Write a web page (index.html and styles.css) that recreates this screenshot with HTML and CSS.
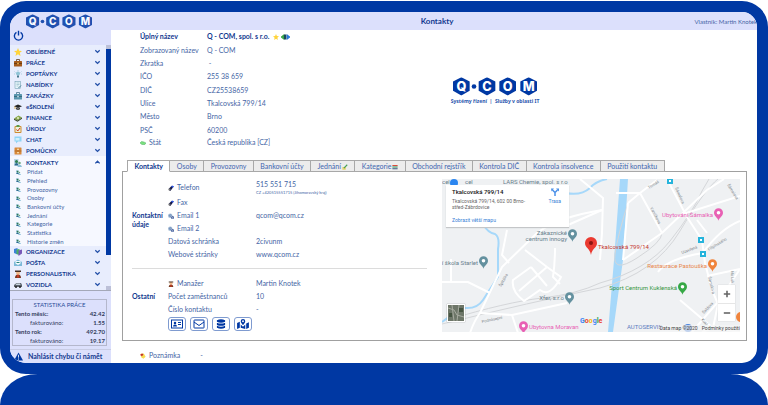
FILE: index.html
```html
<!DOCTYPE html>
<html lang="cs">

	<head>
		<meta charset="UTF-8">
		<title>Kontakty</title>
		<link rel="stylesheet" href="styles.css">
	</head>

	<body>
		<svg class="sprite" aria-hidden="true">
			<symbol id="power" viewBox="0 0 16 16"><path d="M5 3.5a6 6 0 1 0 6 0M8 1v7" fill="none" stroke="#0038a3" stroke-width="2"/></symbol>
			<symbol id="down" viewBox="0 0 8 8"><path d="M1.5 2.5 4 5 6.500 2.500" fill="none" stroke="#2450a8" stroke-width="1.500"/></symbol>
			<symbol id="up" viewBox="0 0 8 8"><path d="M1.500 5 4 2.500 6.500 5" fill="none" stroke="#2450a8" stroke-width="1.500"/></symbol>
			<symbol id="star" viewBox="0 0 16 16"><path d="M8 0l2.300 5.400 5.700.5-4.300 3.800L13 16 8 12.500 3 16l1.300-6.300L0 5.900l5.700-.5z" fill="#ffd43a"/></symbol>
			<symbol id="case" viewBox="0 0 16 16"><path d="M5 4V1h6v3" fill="none" stroke="#5a3310" stroke-width="1.500"/><rect y="4" width="16" height="11" rx="1" fill="#a35a1c"/><path d="M0 9h16" stroke="#5a3310" stroke-width="1.500"/><rect x="6.500" y="7.500" width="3" height="3" fill="#f2c462"/></symbol>
			<symbol id="bulb" viewBox="0 0 16 16"><path d="M8 0v2M1 3l2 2M15 3l-2 2M0 8h2M14 8h2" stroke="#7fb0c4"/><circle cx="8" cy="7" r="4" fill="#8fc4d6"/><rect x="6" y="11" width="4" height="4" fill="#48788c"/></symbol>
			<symbol id="page" viewBox="0 0 16 16"><rect x="2" y="1" width="11" height="14" fill="#e8f6fa" stroke="#5f93a8"/><path d="M5 4h6M5 7h6M5 10h4" stroke="#74a4b6"/><path d="M9 14l5-5" stroke="#4a7f95" stroke-width="2"/></symbol>
			<symbol id="case2" viewBox="0 0 16 16"><path d="M5 4V1h6v3" fill="none" stroke="#3c6f84" stroke-width="1.500"/><rect y="4" width="16" height="11" rx="1" fill="#5895ad"/><path d="M0 9h16" stroke="#2f5f72" stroke-width="1.500"/><rect x="6.500" y="7.500" width="3" height="3" fill="#cfe6ee"/></symbol>
			<symbol id="cap" viewBox="0 0 16 16"><path d="M8 3l8 3.500-8 3.500-8-3.500z" fill="#222"/><path d="M4 9v3.500q4 2.500 8 0V9l-4 2z" fill="#444"/><path d="M2 7v5" stroke="#d89a20" stroke-width="1.500"/></symbol>
			<symbol id="money" viewBox="0 0 16 16"><path d="M0 9l9-6 7 4-9 6z" fill="#8aa84c"/><path d="M0 9l7 4v2.500L0 11.500zM7 13l9-6v2.500l-9 6z" fill="#3d4a2c"/><circle cx="8" cy="8" r="2" fill="#e9efc9"/></symbol>
			<symbol id="task" viewBox="0 0 16 16"><rect x="1" y="2" width="14" height="14" rx="2" fill="#cf8b2e"/><rect x="3" y="4" width="10" height="10" fill="#e9f3da"/><rect x="5" width="6" height="4" fill="#5c9a4a"/><path d="M5 9l2.500 3L12 6" fill="none" stroke="#d2311f" stroke-width="2"/></symbol>
			<symbol id="chat" viewBox="0 0 16 16"><path d="M1 1h14v10H8l-4 4v-4H1z" fill="#8fd4f5"/><path d="M3 4h8v5H3z" fill="#d2effb"/></symbol>
			<symbol id="drawer" viewBox="0 0 16 16"><rect x="1" y="1" width="14" height="14" rx="1" fill="#d8893a"/><path d="M1 8h14" stroke="#8a4c14"/><path d="M6 4.500h4M6 11.500h4" stroke="#fff0c4" stroke-width="2"/></symbol>
			<symbol id="people" viewBox="0 0 16 16"><rect width="9" height="13" fill="#b9d4e6"/><circle cx="5" cy="5" r="3" fill="#2e7d53"/><path d="M1 13q0-5 4-5t4 5z" fill="#2c6b8f"/><circle cx="11" cy="8" r="2.500" fill="#6aa579"/><path d="M7 16q0-5 4-5t5 5z" fill="#8dc0d8"/></symbol>
			<symbol id="shield" viewBox="0 0 16 16"><path d="M0 2l7-2v13L0 10z" fill="#3d80d8"/><path d="M5 3l6-1v12l-6-2z" fill="#4cae62"/><path d="M9 5l7-2v8l-7 5z" fill="#7858b8"/></symbol>
			<symbol id="mail" viewBox="0 0 16 16"><path d="M0 6l8-5 8 5v8H0z" fill="#7db9d8"/><path d="M3 4h10v5l-5 3-5-3z" fill="#f4fbff"/><path d="M5 6h6v2H5z" fill="#27847c"/></symbol>
			<symbol id="person" viewBox="0 0 16 16"><path d="M2 16q0-7 6-7t6 7z" fill="#7a3a22"/><circle cx="8" cy="6" r="4" fill="#efb98a"/><path d="M2 1h12v3H2z" fill="#473024"/><path d="M7 9h2l1 5-2 2-2-2z" fill="#d43b24"/></symbol>
			<symbol id="car" viewBox="0 0 16 16"><path d="M0 8l5-4h9l2 4v4H0z" fill="#59616b"/><path d="M5 5h7l1 3H3z" fill="#c7d3dc"/><circle cx="4" cy="12" r="2" fill="#222"/><circle cx="12" cy="12" r="2" fill="#222"/></symbol>
			<symbol id="phone" viewBox="0 0 16 16"><path d="M2 10L10 2l5 2-8 11q-5 1-5-5z" fill="#171b4a"/><path d="M8 4l4-3 4 3-3 3z" fill="#3158e6"/><circle cx="4" cy="12" r="3" fill="#777"/></symbol>
			<symbol id="at" viewBox="0 0 16 16"><circle cx="6" cy="7" r="6" fill="#a7bdd6"/><circle cx="6" cy="7" r="2.500" fill="none" stroke="#496fa8" stroke-width="1.500"/><path d="M8 8h8v7H8z" fill="#5a72a8"/><path d="M8 8l4 4 4-4" fill="none" stroke="#fff"/></symbol>
			<symbol id="flag" viewBox="0 0 16 16"><path d="M0 8l4-4 6 1 6 3-3 4H5z" fill="#7be07f" stroke="#2c9b42"/></symbol>
			<symbol id="note" viewBox="0 0 16 16"><path d="M2 2l8-1 5 9-6 5-6-4z" fill="#f7dc52"/><path d="M1 3l5-2 3 3-3 4-4-1z" fill="#c5342a"/></symbol>
			<symbol id="net" viewBox="0 0 18 12"><path d="M1 6l4-3v6z" fill="#3aa648" stroke="#3aa648" stroke-width="3"/><rect x="6" y="1" width="5" height="10" fill="#174a5c"/><path d="M17 6l-4-3v6z" fill="#2878d8" stroke="#2878d8" stroke-width="3"/></symbol>
			<symbol id="warn" viewBox="0 0 16 16"><path d="M8 1l8 14H0z" fill="#0038a3"/><path d="M8 5v5M8 11.500v2" stroke="#fff" stroke-width="1.500"/></symbol>
			<symbol id="pin" viewBox="0 0 10 14"><path d="M5 14C4 10 0 9 0 5a5 5 0 0 1 10 0c0 4-4 5-5 9z"/><circle cx="5" cy="5" r="2" fill="#fff"/></symbol>
			<symbol id="hexes" viewBox="0 0 252 56">
				<path d="M25 0 L50 13 V41 L25 55 L0 41 V13Z"/>
				<circle cx="63" cy="28" r="7"/>
				<path d="M102 0 L127 13 V41 L102 55 L77 41 V13Z"/>
				<path d="M164 0 L189 13 V41 L164 55 L139 41 V13Z"/>
				<path d="M227 0 L252 13 V41 L227 55 L202 41 V13Z"/>
			</symbol>
		</svg>

		<div class="frame">
			<header class="top">
				<a class="brand" href="#" aria-label="Q-COM">
					<svg viewBox="0 0 252 56">
						<use href="#hexes"/>
						<g class="logo-text"><text x="25" y="41">Q</text><text x="102" y="41">C</text><text x="164" y="41">O</text><text x="227" y="41">M</text></g>
						<circle cx="164" cy="28" r="5"/>
					</svg>
				</a>
				<h1>Kontakty</h1>
				<span class="owner">Vlastník: Martin Knotek</span>
			</header>

			<aside class="side">
				<div class="side-head">
					<button class="power" aria-label="Odhlásit"><svg><use href="#power"/></svg></button>
				</div>
				<div class="menu-wrap">
					<nav class="menu">
						<div class="group group-top">
							<a href="#"><svg><use href="#star"/></svg>OBLÍBENÉ<svg class="arr"><use href="#down"/></svg></a>
							<a href="#"><svg><use href="#case"/></svg>PRÁCE<svg class="arr"><use href="#down"/></svg></a>
							<a href="#"><svg><use href="#bulb"/></svg>POPTÁVKY<svg class="arr"><use href="#down"/></svg></a>
							<a href="#"><svg><use href="#page"/></svg>NABÍDKY<svg class="arr"><use href="#down"/></svg></a>
							<a href="#"><svg><use href="#case2"/></svg>ZAKÁZKY<svg class="arr"><use href="#down"/></svg></a>
							<a href="#"><svg><use href="#cap"/></svg>eŠKOLENÍ<svg class="arr"><use href="#down"/></svg></a>
							<a href="#"><svg><use href="#money"/></svg>FINANCE<svg class="arr"><use href="#down"/></svg></a>
							<a href="#"><svg><use href="#task"/></svg>ÚKOLY<svg class="arr"><use href="#down"/></svg></a>
							<a href="#"><svg><use href="#chat"/></svg>CHAT<svg class="arr"><use href="#down"/></svg></a>
							<a href="#"><svg><use href="#drawer"/></svg>POMŮCKY<svg class="arr"><use href="#down"/></svg></a>
						</div>
						<div class="group open">
							<a href="#"><svg><use href="#people"/></svg>KONTAKTY<svg class="arr"><use href="#up"/></svg></a>
						</div>
						<div class="sub">
							<a href="#"><svg><use href="#people"/></svg>Přidat</a>
							<a href="#"><svg><use href="#people"/></svg>Přehled</a>
							<a href="#"><svg><use href="#people"/></svg>Provozovny</a>
							<a href="#"><svg><use href="#people"/></svg>Osoby</a>
							<a href="#"><svg><use href="#people"/></svg>Bankovní účty</a>
							<a href="#"><svg><use href="#people"/></svg>Jednání</a>
							<a href="#"><svg><use href="#people"/></svg>Kategorie</a>
							<a href="#"><svg><use href="#people"/></svg>Statistika</a>
							<a href="#"><svg><use href="#people"/></svg>Historie změn</a>
						</div>
						<div class="group">
							<a href="#"><svg><use href="#shield"/></svg>ORGANIZACE<svg class="arr"><use href="#down"/></svg></a>
							<a href="#"><svg><use href="#mail"/></svg>POŠTA<svg class="arr"><use href="#down"/></svg></a>
							<a href="#"><svg><use href="#person"/></svg>PERSONALISTIKA<svg class="arr"><use href="#down"/></svg></a>
							<a href="#"><svg><use href="#car"/></svg>VOZIDLA<svg class="arr"><use href="#down"/></svg></a>
						</div>
					</nav>
					<div class="scroll"><div class="thumb"></div></div>
				</div>
				<table class="stats">
					<caption>STATISTIKA PRÁCE</caption>
					<tr><th>Tento měsíc:</th><td>42.42</td></tr>
					<tr><th class="in">fakturováno:</th><td>1.55</td></tr>
					<tr><th>Tento rok:</th><td>492.70</td></tr>
					<tr><th class="in">fakturováno:</th><td>19.17</td></tr>
				</table>
				<a class="report" href="#"><svg><use href="#warn"/></svg>Nahlásit chybu či námět</a>
			</aside>

			<main>
				<section class="info">
					<dl>
						<dt class="b">Úplný název</dt><dd class="b">Q - COM, spol. s r.o. <svg><use href="#star"/></svg><svg class="net"><use href="#net"/></svg></dd>
						<dt>Zobrazovaný název</dt><dd>Q - COM</dd>
						<dt>Zkratka</dt><dd>&nbsp;-</dd>
						<dt>IČO</dt><dd>255 38 659</dd>
						<dt>DIČ</dt><dd>CZ25538659</dd>
						<dt>Ulice</dt><dd>Tkalcovská 799/14</dd>
						<dt>Město</dt><dd>Brno</dd>
						<dt>PSČ</dt><dd>60200</dd>
						<dt><svg><use href="#flag"/></svg>Stát</dt><dd>Česká republika [CZ]</dd>
					</dl>
					<div class="company">
						<svg viewBox="0 0 252 56">
							<use href="#hexes"/>
							<g class="logo-text"><text x="25" y="41">Q</text><text x="102" y="41">C</text><text x="164" y="41">O</text><text x="227" y="41">M</text></g>
							<circle cx="164" cy="28" r="5"/>
						</svg>
						<p>Systémy řízení &nbsp;|&nbsp; Služby v oblasti IT</p>
					</div>
				</section>

				<div class="tabs" role="tablist">
					<button role="tab" class="active" aria-selected="true">Kontakty</button>
					<button role="tab">Osoby</button>
					<button role="tab">Provozovny</button>
					<button role="tab">Bankovní účty</button>
					<button role="tab">Jednání<svg viewBox="0 0 16 16"><path d="M1 8h9v7H1z" fill="#e5d36a"/><path d="M5 11l9-9" stroke="#46a05a" stroke-width="3"/></svg></button>
					<button role="tab">Kategorie<svg viewBox="0 0 16 16"><path d="M1 4h14" stroke="#d84a3a" stroke-width="3"/><path d="M1 8h14" stroke="#2f8a58" stroke-width="3"/><path d="M1 12.500h14" stroke="#3a5580" stroke-width="3"/></svg></button>
					<button role="tab">Obchodní rejstřík</button>
					<button role="tab">Kontrola DIČ</button>
					<button role="tab">Kontrola insolvence</button>
					<button role="tab">Použití kontaktu</button>
				</div>

				<section class="panel">
					<div class="details">
						<div class="block">
							<h2>Kontaktní údaje</h2>
							<dl>
								<dt><svg><use href="#phone"/></svg>Telefon</dt><dd>515 551 715<small>CZ +420515551715 (Jihomoravský kraj)</small></dd>
								<dt><svg><use href="#phone"/></svg>Fax</dt><dd></dd>
								<dt><svg><use href="#at"/></svg>Email 1</dt><dd>qcom@qcom.cz</dd>
								<dt><svg><use href="#at"/></svg>Email 2</dt><dd></dd>
								<dt>Datová schránka</dt><dd>2civunm</dd>
								<dt>Webové stránky</dt><dd>www.qcom.cz</dd>
							</dl>
						</div>
						<div class="block other">
							<h2>Ostatní</h2>
							<dl>
								<dt><svg><use href="#person"/></svg>Manažer</dt><dd>Martin Knotek</dd>
								<dt>Počet zaměstnanců</dt><dd>10</dd>
								<dt>Číslo kontaktu</dt><dd>-</dd>
							</dl>
						</div>
						<div class="actions">
							<button aria-label="Vizitka"><svg viewBox="0 0 24 18"><rect x="1" y="1" width="22" height="16" fill="none" stroke="#0038a3" stroke-width="2"/><circle cx="8" cy="7" r="2.500"/><path d="M4 14q0-4 4-4t4 4zM14 5h6v2h-6zM14 9h6v2h-6z"/></svg></button>
							<button aria-label="Napsat e-mail"><svg viewBox="0 0 24 18"><rect x="2" y="1" width="20" height="16" rx="1" fill="none" stroke="#0038a3" stroke-width="2"/><path d="M2 5l10 7 10-7" fill="none" stroke="#0038a3" stroke-width="2"/></svg></button>
							<button aria-label="Databáze"><svg viewBox="0 0 24 22"><path d="M3 3q9-5 18 0v3q-9 4-18 0zM3 8q9 4 18 0v5q-9 4-18 0zM3 15q9 4 18 0v4q-9 5-18 0z"/></svg></button>
							<button aria-label="Mapa"><svg viewBox="0 0 26 22"><path d="M0 9l6-3v13l-6 3zM8 12l5 5 5-5v10l-10-3zM20 10l6-3v12l-6 3z"/><path d="M13 14C12 11 8 9 8 5a5 5 0 0 1 10 0c0 4-4 6-5 9z"/><circle cx="13" cy="5" r="2" fill="#fff"/></svg></button>
						</div>
					</div>

					<div class="map">
						<svg class="canvas" viewBox="0 0 298 153" preserveAspectRatio="xMidYMid slice">
							<rect width="298" height="153" fill="#eff1f3"/>
							<g fill="none" stroke="#a6d8fa" stroke-width="2">
								<path d="M40 44Q46 54 53 55Q58 58 56 70V98Q48 110 41 121Q35 130 23 129Q12 134 0 143"/>
								<path d="M124 14Q139 17 148 9Q154 2 165 0"/>
							</g>
							<path d="M178 0h8L181 81 171 153h-5L172 81z" fill="#a6d8fa"/>
							<g fill="none" stroke="#d4d6d9">
								<path d="M5 141Q65 123 100 119T158 104Q205 91 228 62T260 12L267 0M0 145Q90 123 158 109Q213 94 238 52T276 0"/>
								<path d="M186 24Q176 55 173 75T195 79T220 54"/>
							</g>
							<g fill="none" stroke="#fff" stroke-width="2">
								<path d="M28 154Q32 142 38 134L60 88 95 54Q116 38 160 31M65 51L60 76 67 84M83 71L105 88 119 98Q108 119 98 111L82 122Q69 112 71 101L89 88M77 112L105 88M89 88L105 107M113 69Q113 84 111 98L118 105"/>
								<path d="M0 103H26L48 114M9 80V103M38 134L70 136 125 124M70 136L76 154"/>
								<path d="M138 0L161 19 160 54 158 81M126 46L160 31M174 14H188L198 14 215 1M198 14L220 54 265 11 282 0M186 24L198 14M181 81L220 54M186 24L181 81"/>
								<path d="M225 0L245 38 260 61 263 84 270 111 276 125 271 149M241 35L298 17M255 41L265 54M216 93Q225 80 261 74Q278 50 298 42M265 97L298 90M238 121L271 149M250 153L276 123 298 90M260 153L271 149 298 153"/>
							</g>
							<g fill="#26b4dc">
								<rect x="225" y="0" width="6" height="5"/><rect x="256" y="58" width="6" height="6"/><rect x="258" y="72" width="6" height="6"/>
							</g>
							<g fill="#fff"><rect x="227" y="1" width="2" height="2"/><rect x="258" y="60" width="2" height="2"/><rect x="260" y="74" width="2" height="2"/></g>
							<g class="road">
								<text transform="translate(59 108) rotate(-60)">Špitálka</text>
								<text transform="translate(40 144) rotate(-12)">Podnásepní</text>
								<text transform="translate(207 10) rotate(-32)">Tomáš</text>
								<text transform="translate(208 29) rotate(62)">Vaníčkova</text>
								<text transform="translate(233 9) rotate(66)">Šámalova</text>
								<text transform="translate(285 6) rotate(58)">Šámalova</text>
								<text transform="translate(240 75) rotate(-20)">Uzavřená</text>
								<text transform="translate(267 72) rotate(-32)">Filipínského</text>
								<text transform="translate(266 98) rotate(76)">Šámalova</text>
								<text transform="translate(262 135) rotate(-48)">Šaldova</text>
								<text transform="translate(289 92) rotate(88)">Na Luk</text>
								<text transform="translate(259 141) rotate(48)">Kukl</text>
							</g>
							<g class="place">
								<text x="61" y="5">LARS Chemie, spol. s r.o</text>
								<text x="23" y="5">cel</text>
								<text x="0" y="5">cel</text>
								<text x="125" y="56" text-anchor="end">Zákaznické</text>
								<text x="125" y="62" text-anchor="end">centrum innogy</text>
								<text x="36" y="86" text-anchor="end">í škola Starlet</text>
								<text x="122" y="121" text-anchor="end">Xfer, s.r.o</text>
								<text x="185" y="150" fill="#5b7dc0">AUTOSERVIS</text>
								<text x="87" y="150" fill="#e860b4">Ubytovna Moravan</text>
								<text x="271" y="38" text-anchor="end" fill="#e860b4">Ubytování Šámalka</text>
								<text x="265" y="89" text-anchor="end" fill="#e8854a">Restaurace Pastouška</text>
								<text x="235" y="111" text-anchor="end" fill="#36963f">Sport Centrum Kuklenská</text>
								<text class="target" x="156" y="70">Tkalcovská 799/14</text>
							</g>
							<circle cx="12" cy="4" r="4" fill="#2b86f0"/>
							<circle cx="246" cy="149" r="4" fill="#4a82dc"/>
							<circle cx="299" cy="138" r="5" fill="#f0843c"/>
							<g fill="#64919f">
								<use href="#pin" x="126" y="50" width="9" height="13"/>
								<use href="#pin" x="37" y="77" width="9" height="13"/>
								<use href="#pin" x="123" y="113" width="9" height="13"/>
							</g>
							<use href="#pin" x="77" y="142" width="9" height="13" fill="#e860b4"/>
							<use href="#pin" x="272" y="29" width="9" height="13" fill="#e860b4"/>
							<use href="#pin" x="266" y="80" width="9" height="13" fill="#f0843c"/>
							<use href="#pin" x="236" y="103" width="9" height="13" fill="#36a845"/>
							<path d="M149 76C148 69 143 69 143 64a6 6 0 0 1 12 0c0 5-5 5-6 12z" fill="#ea3a30"/>
							<circle cx="149" cy="64" r="2" fill="#8c1410"/>
							<g class="google"><text x="138" y="144"><tspan fill="#4285f4">G</tspan><tspan fill="#ea4335">o</tspan><tspan fill="#fbbc05">o</tspan><tspan fill="#4285f4">g</tspan><tspan fill="#34a853">l</tspan><tspan fill="#ea4335">e</tspan></text></g>
						</svg>
						<div class="card">
							<div>
								<h3>Tkalcovská 799/14</h3>
								<p>Tkalcovská 799/14, 602 00 Brno-střed-Zábrdovice</p>
								<a href="#">Zobrazit větší mapu</a>
							</div>
							<a class="route" href="#"><svg viewBox="0 0 16 16"><path d="M8 16V9L3 4M8 9l5-5" fill="none" stroke="#4a90e8" stroke-width="3"/><path d="M0 1h6L1 7zM10 1h6v6z" fill="#4a90e8"/></svg>Trasa</a>
						</div>
						<button class="sat" aria-label="Satelitní mapa"><svg viewBox="0 0 16 16"><rect width="16" height="16" fill="#6d7668"/><path d="M0 3l6 2 3 5 7 2M4 0l2 16M11 0l-2 16" stroke="#a7aba0" fill="none"/><path d="M1 8h3v4H1zM11 3h4v4h-4z" fill="#465542"/></svg></button>
						<div class="zoom">
							<button aria-label="Přiblížit"><svg viewBox="0 0 10 10"><path d="M5 1v8M1 5h8" stroke="#666" stroke-width="2"/></svg></button>
							<button aria-label="Oddálit"><svg viewBox="0 0 10 10"><path d="M1 5h8" stroke="#666" stroke-width="2"/></svg></button>
						</div>
						<div class="terms"><span>Data map ©2020</span><a href="#">Podmínky použití</a></div>
					</div>
				</section>

				<div class="remark"><span><svg><use href="#note"/></svg>Poznámka</span><span>-</span></div>
			</main>
		</div>
		<div class="base"></div>
	</body>

</html>
```
FILE: styles.css
```css
* {
	box-sizing: border-box;
	margin: 0;
	padding: 0;
}

body {
	display: flex;
	flex-direction: column;
	min-height: 100vh;
	padding-top: 1px;
	background: #fff;
	font: 7px/9px "Century Gothic", Lato, sans-serif;
	color: #4565a5;
}

a {
	color: inherit;
	text-decoration: none;
}

button {
	font: inherit;
	color: inherit;
	border: 0;
	background: none;
	cursor: pointer;
}

svg {
	flex: none;
	width: 8px;
	height: 8px;
	fill: #0038a3;
}

.sprite {
	position: absolute;
	width: 0;
	height: 0;
}

.logo-text {
	fill: #fff;
	font: 800 38px Inter, sans-serif;
	text-anchor: middle;
}

.frame {
	display: grid;
	grid-template-columns: 101px 1fr;
	grid-template-rows: 18px 1fr;
	border: 11px solid #0038a3;
	border-left-width: 10px;
	border-radius: 26px;
	background: #fff;
	overflow: hidden;
}

.base {
	flex: 1;
	min-height: 30px;
	background: #0038a3;
	border-radius: 44px 44px 0 0 / 36px 36px 0 0;
}

/* header */
.top {
	grid-column: 1 / 3;
	display: grid;
	grid-template-columns: 107px 1fr auto 1fr;
	align-items: center;
	background: #dce0fc;
}

.brand {
	padding-left: 16px;
}

.brand svg {
	display: block;
	width: 66px;
	height: 15px;
	opacity: 0.85;
}

h1 {
	grid-column: 3;
	font-size: 8px;
	color: #12398f;
}

.owner {
	font-size: 6px;
	text-align: right;
	white-space: nowrap;
}

/* sidebar */
.side {
	align-self: start;
	background: #dce0fc;
}

.side-head {
	height: 15px;
	padding-left: 3px;
}

.power {
	display: block;
}

.power svg {
	display: block;
	width: 11px;
	height: 11px;
}

.menu-wrap {
	display: flex;
	border-bottom: 1px solid #a4a8b8;
}

.menu {
	flex: 1;
	background: #e8edfd;
	font-weight: bold;
	font-size: 6px;
	line-height: 8px;
	color: #12398f;
}

.menu a {
	display: flex;
	align-items: center;
	gap: 4px;
	height: 11px;
	padding: 0 5px 0 4px;
}

.menu .arr {
	width: 7px;
	height: 7px;
	margin-left: auto;
}

.group-top {
	padding-top: 1px;
}

.open,
.sub {
	background: #f6f8ff;
}

.open {
	padding-top: 1px;
}

.sub {
	display: grid;
	grid-auto-rows: 1fr;
	height: 78px;
	font-weight: normal;
	color: #4565a5;
}

.sub a {
	height: auto;
	gap: 6px;
	padding-left: 6px;
}

.sub svg {
	width: 5px;
	height: 5px;
}

.scroll {
	width: 5px;
	background: #e8edfd;
	border: solid #bcc0d8;
	border-width: 4px 0;
}

.thumb {
	height: 87%;
	background: #0038a3;
}

.stats {
	width: 95px;
	margin: 8px 0 0 2px;
	border: 1px solid #b4b7cc;
	border-top: 0;
	border-spacing: 0;
	font-size: 6px;
	line-height: 9px;
	color: #333d5c;
}

.stats caption {
	height: 10px;
	border: 1px solid #b4b7cc;
	border-bottom: 0;
	color: #2a4c98;
}

.stats th {
	padding-left: 2px;
	font-weight: bold;
	text-align: left;
}

.stats .in {
	padding-left: 17px;
	font-weight: normal;
}

.stats td {
	padding-right: 1px;
	font-weight: bold;
	text-align: right;
}

.report {
	display: flex;
	align-items: center;
	gap: 5px;
	height: 14px;
	margin-top: 3px;
	padding-left: 4px;
	border-top: 1px solid #c8cce4;
	font-weight: bold;
	color: #12398f;
	white-space: nowrap;
}

.report svg {
	width: 9px;
	height: 9px;
}

/* contact header */
main {
	min-width: 0;
	padding: 0 10px 0 11px;
}

.info {
	display: flex;
	padding-left: 18px;
}

.info dl {
	display: grid;
	grid-template-columns: 67px 134px;
	grid-template-rows: repeat(8, 1fr) 11px;
	align-items: center;
	height: 118px;
	white-space: nowrap;
}

dt svg {
	width: 6px;
	height: 6px;
	margin-right: 3px;
	vertical-align: -1px;
}

.info dd svg {
	width: 6px;
	height: 6px;
	margin-left: 2px;
	vertical-align: -1px;
}

.info dd .net {
	width: 9px;
}

.info .b {
	font-weight: bold;
	color: #12398f;
}

.company {
	flex: 1;
	max-width: 308px;
	padding-top: 47px;
	text-align: center;
}

.company svg {
	display: block;
	width: 84px;
	height: 19px;
	margin: 0 auto;
}

.company p {
	padding-top: 1px;
	font: bold 5px/8px "Noto Sans", sans-serif;
	color: #2a55ae;
}

/* tabs */
.tabs {
	position: relative;
	display: flex;
	width: 86%;
	margin: 12px 0 0 5px;
}

.tabs button {
	flex: 1 1 auto;
	height: 12px;
	border: 1px solid #a8a8a8;
	border-left-width: 0;
	background: #ececec;
	color: #3f66b0;
	line-height: 10px;
	white-space: nowrap;
}

.tabs .active {
	border-left-width: 1px;
	border-bottom-color: #fff;
	background: #fff;
	color: #12398f;
	font-weight: bold;
}

.tabs svg {
	width: 6px;
	height: 6px;
	margin-left: 1px;
	vertical-align: -1px;
}

.panel {
	display: flex;
	gap: 15px;
	margin-top: -1px;
	padding: 7px 6px 8px 9px;
	border: 1px solid #a0a0a0;
}

.details {
	flex: 1;
}

.block {
	display: grid;
	grid-template-columns: 36px 1fr;
	align-items: center;
}

.block h2 {
	font-size: 7px;
	line-height: 9px;
	color: #12398f;
}

.block dl {
	display: grid;
	grid-template-columns: 88px 1fr;
	grid-auto-rows: 13px;
	grid-template-rows: 17px;
	align-items: center;
	white-space: nowrap;
}

.other {
	margin-top: 7px;
	padding-top: 8px;
	border-top: 1px solid #dcdcdc;
}

.other dl {
	grid-template-rows: 13px;
}

small {
	display: block;
	font-size: 4px;
	line-height: 7px;
}

.actions {
	display: flex;
	gap: 4px;
	padding: 1px 0 0 36px;
}

.actions button {
	display: grid;
	place-items: center;
	width: 18px;
	height: 14px;
	border: 1px solid #7f9bd0;
	border-radius: 3px;
}

.actions svg {
	width: 12px;
	height: 10px;
}

/* map */
.map {
	position: relative;
	flex: 0 1 298px;
	min-height: 153px;
	overflow: hidden;
	font-family: Roboto, sans-serif;
}

.canvas {
	display: block;
	width: 100%;
	height: 100%;
}

.place {
	font: 6px Roboto, sans-serif;
	fill: #67808c;
}

.target {
	fill: #c5352c;
}

.road {
	font: 4px Roboto, sans-serif;
	fill: #80868b;
}

.google {
	font: bold 7px Roboto, sans-serif;
}

.card {
	position: absolute;
	top: 6px;
	left: 4px;
	display: flex;
	justify-content: space-between;
	width: 123px;
	padding: 3px 8px 4px 6px;
	background: #fff;
	box-shadow: 0 1px 1px #c4c6c8;
	font-size: 5px;
	line-height: 6px;
	color: #666;
}

.card h3 {
	margin-bottom: 2px;
	font-size: 6px;
	line-height: 8px;
	font-weight: 500;
	color: #111;
}

.card p {
	width: 82px;
	margin-bottom: 7px;
}

.card a {
	color: #3a7fd6;
}

.route {
	display: flex;
	flex-direction: column;
	align-items: center;
	gap: 2px;
}

.sat {
	position: absolute;
	bottom: 10px;
	left: 5px;
	width: 18px;
	height: 18px;
	border: 1px solid #fff;
	box-shadow: 0 0 1px #888;
}

.sat svg {
	display: block;
	width: 16px;
	height: 16px;
}

.zoom {
	position: absolute;
	right: 5px;
	bottom: 11px;
	display: grid;
	width: 17px;
	background: #fff;
	box-shadow: 0 0 1px #bbb;
}

.zoom button {
	display: grid;
	place-items: center;
	height: 18px;
}

.zoom button + button {
	border-top: 1px solid #e6e6e6;
}

.terms {
	position: absolute;
	right: 0;
	bottom: 0;
	display: flex;
	gap: 4px;
	font-size: 5px;
	line-height: 7px;
	color: #444;
	background: rgba(245, 245, 245, 0.7);
}

.remark {
	display: flex;
	gap: 20px;
	padding: 10px 0 1px 18px;
}

.remark svg {
	width: 6px;
	height: 6px;
	margin-right: 3px;
	vertical-align: -1px;
}
```
